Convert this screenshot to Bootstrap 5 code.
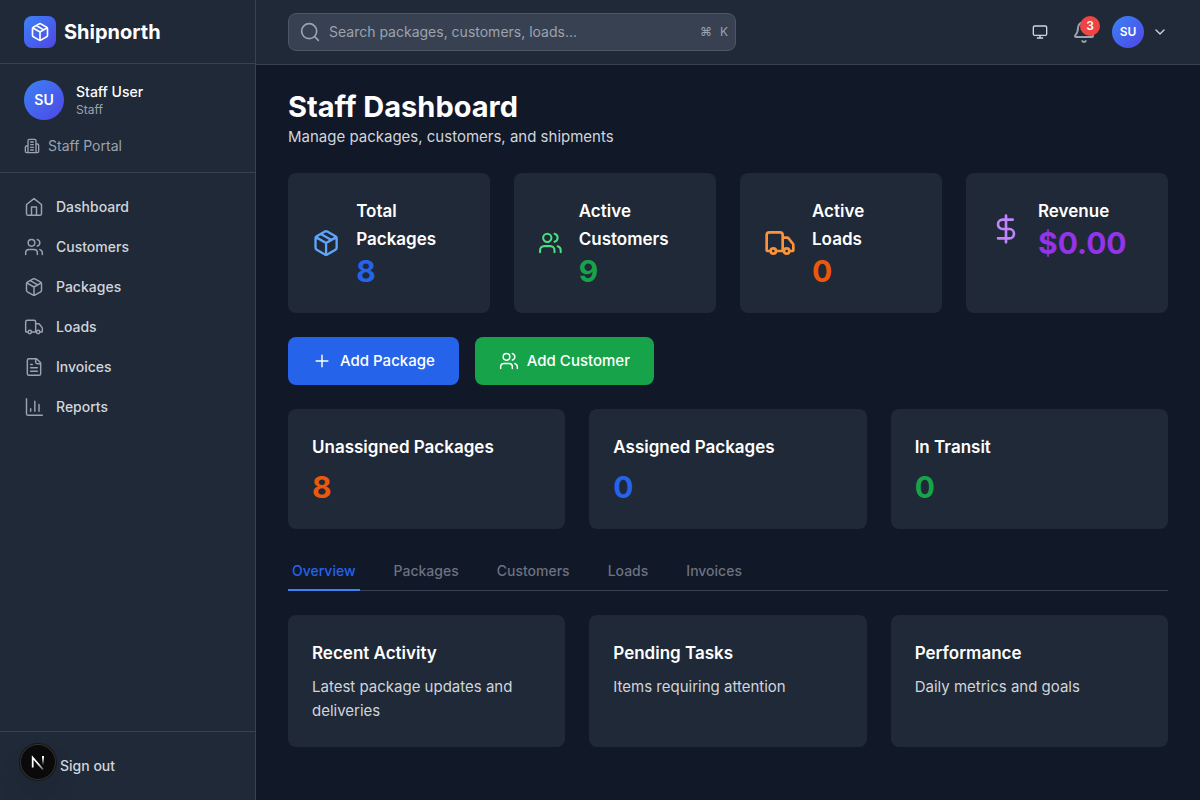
<!DOCTYPE html>
<html lang="en" data-bs-theme="dark">
<head>
<meta charset="utf-8">
<meta name="viewport" content="width=device-width, initial-scale=1">
<title>Shipnorth – Staff Dashboard</title>
<link href="https://cdn.jsdelivr.net/npm/bootstrap@5.3.0/dist/css/bootstrap.min.css" rel="stylesheet">
<style>
  :root {
    --page: #111827; --panel: #1f2937; --line: #374151;
    --soft: #d1d5db; --muted: #9ca3af; --dim: #6b7280;
    --blue: #2563eb; --green: #16a34a; --orange: #ea580c; --purple: #9333ea;
  }
  body { background: var(--page); color: #fff; font-family: Inter, "Liberation Sans", sans-serif; font-size: 15px; line-height: 24px; }
  .icon { fill: none; stroke: currentColor; stroke-width: 2; stroke-linecap: round; stroke-linejoin: round; width: 20px; height: 20px; }
  .icon-16 { width: 16px; height: 16px; }
  .icon-24 { width: 24px; height: 24px; }
  .icon-32 { width: 32px; height: 32px; flex-shrink: 1; min-width: 0; }
  .text-sm { font-size: 14px; line-height: 20px; }
  .text-xs { font-size: 12px; line-height: 16px; }
  .soft { color: var(--soft); }
  .muted { color: var(--muted); }
  .medium { font-weight: 500; }
  .gradient-fill { background: linear-gradient(135deg, #3b82f6, #4f46e5); }

  .sidebar { width: 256px; background: var(--panel); border-right: 1px solid var(--line); position: sticky; top: 0; height: 100vh; }
  .brand-bar { height: 64px; border-bottom: 1px solid var(--line); }
  .brand-mark { width: 32px; height: 32px; border-radius: 8px; }
  .brand-name { font-size: 20px; line-height: 28px; font-weight: 700; }
  .user-box { border-bottom: 1px solid var(--line); }
  .avatar { width: 40px; height: 40px; border-radius: 50%; font-size: 14px; font-weight: 600; }
  .avatar-sm { width: 32px; height: 32px; font-size: 12px; }
  .side-link { color: var(--soft); font-size: 14px; line-height: 20px; font-weight: 500; padding: 8px; border: 0; background: none; border-radius: 8px; text-decoration: none; }
  .side-link:hover { background: var(--line); color: #fff; }
  .side-link .icon { color: var(--muted); stroke-width: 1.75; }
  .side-foot { border-top: 1px solid var(--line); }

  .top-bar { height: 65px; background: var(--panel); border-bottom: 1px solid var(--line); padding: 0 32px; }
  .search { position: relative; width: 100%; max-width: 448px; }
  .search .form-control { background: var(--line); border: 1px solid #4b5563; border-radius: 8px; color: #fff; font-size: 14px; line-height: 20px; padding: 8px 64px 8px 40px; }
  .search .form-control::placeholder { color: var(--muted); opacity: 1; }
  .search-icon { position: absolute; top: 0; bottom: 0; left: 12px; margin: auto; color: var(--muted); }
  .search-keys { position: absolute; top: 0; bottom: 0; right: 8px; color: var(--muted); pointer-events: none; }
  .bar-tools { gap: 10px; }
  .bar-btn { border: 0; background: none; padding: 8px; line-height: 0; position: relative; color: var(--soft); }
  .bell-btn { padding: 6px; }
  .count { position: absolute; top: 2px; right: 2px; width: 20px; height: 20px; border-radius: 50%; background: #ef4444; color: #fff; font-size: 12px; line-height: 20px; font-weight: 600; text-align: center; }

  .content { padding: 24px 32px; }
  .page-title { font-size: 29px; line-height: 36px; font-weight: 700; }
  .panel { background: var(--panel); border-radius: 8px; padding: 24px; height: 100%; }
  .panel-title { font-size: 17px; line-height: 28px; font-weight: 600; margin: 0; }
  .figure-num { font-size: 30px; line-height: 36px; font-weight: 700; margin: 0; }
  .c-blue { color: var(--blue); } .c-green { color: var(--green); } .c-orange { color: var(--orange); } .c-purple { color: var(--purple); }
  .l-blue { color: #60a5fa; } .l-green { color: #4ade80; } .l-orange { color: #fb923c; } .l-purple { color: #c084fc; }
  .action { border: 0; border-radius: 8px; color: #fff; padding: 12px 24px; font-size: 15px; line-height: 24px; font-weight: 500; }
  .action:hover { color: #fff; filter: brightness(.9); }
  .action-blue, .action-blue:hover { background: var(--blue); }
  .action-green, .action-green:hover { background: var(--green); }
  .action .icon { stroke-width: 1.75; }
  .tabs { border-bottom: 1px solid var(--line); gap: 30px; margin-bottom: 24px; }
  .tabs .nav-link { color: var(--dim); font-size: 14px; line-height: 20px; font-weight: 500; padding: 8px 4px; border-bottom: 2px solid transparent; margin-bottom: -1px; }
  .tabs .nav-link.active { color: var(--blue); border-color: #3b82f6; }

  .dev-badge { position: fixed; left: 20px; bottom: 20px; width: 36px; height: 36px; border-radius: 50%; border: 0; padding: 0; line-height: 0; background: #0a0a0a; box-shadow: 0 0 0 1px #171717, inset 0 0 0 1px #333, 0 16px 32px -8px rgba(0,0,0,.24); }
</style>
</head>
<body>
<svg class="d-none" aria-hidden="true">
  <symbol id="package" viewBox="0 0 24 24"><path d="M11 21.73a2 2 0 0 0 2 0l7-4A2 2 0 0 0 21 16V8a2 2 0 0 0-1-1.73l-7-4a2 2 0 0 0-2 0l-7 4A2 2 0 0 0 3 8v8a2 2 0 0 0 1 1.73zM12 22V12M3.29 7 12 12l8.71-5M7.5 4.27l9 5.15"/></symbol>
  <symbol id="users" viewBox="0 0 24 24"><path d="M16 21v-2a4 4 0 0 0-4-4H6a4 4 0 0 0-4 4v2M22 21v-2a4 4 0 0 0-3-3.87M16 3.13a4 4 0 0 1 0 7.75"/><circle cx="9" cy="7" r="4"/></symbol>
  <symbol id="truck" viewBox="0 0 24 24"><path d="M14 18V6a2 2 0 0 0-2-2H4a2 2 0 0 0-2 2v11a1 1 0 0 0 1 1h2M15 18H9M19 18h2a1 1 0 0 0 1-1v-3.65a1 1 0 0 0-.22-.62l-3.48-4.35A1 1 0 0 0 17.52 8H14"/><circle cx="17" cy="18" r="2"/><circle cx="7" cy="18" r="2"/></symbol>
  <symbol id="dollar" viewBox="0 0 24 24"><path d="M12 2v20M17 5H9.5a3.5 3.5 0 0 0 0 7h5a3.5 3.5 0 0 1 0 7H6"/></symbol>
  <symbol id="home" viewBox="0 0 24 24"><path d="m3 9 9-7 9 7v11a2 2 0 0 1-2 2H5a2 2 0 0 1-2-2zM9 22V12h6v10"/></symbol>
  <symbol id="file" viewBox="0 0 24 24"><path d="M15 2H6a2 2 0 0 0-2 2v16a2 2 0 0 0 2 2h12a2 2 0 0 0 2-2V7zM14 2v4a2 2 0 0 0 2 2h4M10 9H8M16 13H8M16 17H8"/></symbol>
  <symbol id="chart" viewBox="0 0 24 24"><path d="M3 2v18a2 2 0 0 0 2 2h17M18 17V9M13 17V5M8 17v-3"/></symbol>
  <symbol id="building" viewBox="0 0 24 24"><path d="M6 22V4a2 2 0 0 1 2-2h8a2 2 0 0 1 2 2v18ZM6 12H4a2 2 0 0 0-2 2v6a2 2 0 0 0 2 2h2M18 9h2a2 2 0 0 1 2 2v9a2 2 0 0 1-2 2h-2M10 6h4M10 10h4M10 14h4M10 18h4"/></symbol>
  <symbol id="search" viewBox="0 0 24 24"><circle cx="11" cy="11" r="9"/><path d="m22 22-4.4-4.4"/></symbol>
  <symbol id="monitor" viewBox="0 0 24 24"><rect x="2" y="3" width="20" height="14" rx="2"/><path d="M8 21h8M12 17v4"/></symbol>
  <symbol id="bell" viewBox="0 0 24 24"><path d="M3.26 15.33A1 1 0 0 0 4 17h16a1 1 0 0 0 .74-1.67C19.41 13.96 18 12.5 18 8A6 6 0 0 0 6 8c0 4.5-1.41 5.96-2.74 7.33M10.27 21a2 2 0 0 0 3.46 0"/></symbol>
  <symbol id="chevron" viewBox="0 0 24 24"><path d="m6 9 6 6 6-6"/></symbol>
  <symbol id="plus" viewBox="0 0 24 24"><path d="M5 12h14M12 5v14"/></symbol>
  <symbol id="logout" viewBox="0 0 24 24"><path d="M9 21H5a2 2 0 0 1-2-2V5a2 2 0 0 1 2-2h4M16 17l5-5-5-5M21 12H9"/></symbol>
</svg>

<div class="d-flex min-vh-100">
  <aside class="sidebar d-none d-md-flex flex-column flex-shrink-0">
    <div class="brand-bar d-flex align-items-center gap-2 px-4">
      <span class="brand-mark gradient-fill d-flex align-items-center justify-content-center"><svg class="icon"><use href="#package"/></svg></span>
      <span class="brand-name">Shipnorth</span>
    </div>
    <div class="user-box px-4 py-3">
      <div class="d-flex align-items-center mb-3">
        <span class="avatar gradient-fill d-flex align-items-center justify-content-center me-2">SU</span>
        <div class="ms-1">
          <div class="text-sm medium">Staff User</div>
          <div class="text-xs muted">Staff</div>
        </div>
      </div>
      <div class="d-flex align-items-center gap-2 text-sm muted"><svg class="icon icon-16"><use href="#building"/></svg>Staff Portal</div>
    </div>
    <nav class="d-flex flex-column gap-1 p-3 flex-grow-1" aria-label="Main">
      <a class="side-link d-flex align-items-center" href="#"><svg class="icon me-2"><use href="#home"/></svg><span class="ms-1">Dashboard</span></a>
      <a class="side-link d-flex align-items-center" href="#"><svg class="icon me-2"><use href="#users"/></svg><span class="ms-1">Customers</span></a>
      <a class="side-link d-flex align-items-center" href="#"><svg class="icon me-2"><use href="#package"/></svg><span class="ms-1">Packages</span></a>
      <a class="side-link d-flex align-items-center" href="#"><svg class="icon me-2"><use href="#truck"/></svg><span class="ms-1">Loads</span></a>
      <a class="side-link d-flex align-items-center" href="#"><svg class="icon me-2"><use href="#file"/></svg><span class="ms-1">Invoices</span></a>
      <a class="side-link d-flex align-items-center" href="#"><svg class="icon me-2"><use href="#chart"/></svg><span class="ms-1">Reports</span></a>
    </nav>
    <div class="side-foot p-3">
      <button type="button" class="side-link d-flex align-items-center gap-3 w-100"><svg class="icon"><use href="#logout"/></svg>Sign out</button>
    </div>
  </aside>

  <div class="flex-grow-1">
    <header class="top-bar d-flex align-items-center justify-content-between gap-3">
      <div class="search">
        <svg class="icon search-icon"><use href="#search"/></svg>
        <input class="form-control" type="search" aria-label="Search" placeholder="Search packages, customers, loads...">
        <span class="search-keys text-xs d-flex align-items-center gap-2"><span>⌘</span><span>K</span></span>
      </div>
      <div class="bar-tools d-flex align-items-center">
        <button type="button" class="bar-btn" aria-label="Theme"><svg class="icon icon-16"><use href="#monitor"/></svg></button>
        <button type="button" class="bar-btn bell-btn" aria-label="Notifications"><svg class="icon icon-24 muted"><use href="#bell"/></svg><span class="count">3</span></button>
        <button type="button" class="bar-btn d-flex align-items-center gap-2 p-0" aria-label="Account">
          <span class="avatar avatar-sm gradient-fill text-white d-flex align-items-center justify-content-center">SU</span>
          <svg class="icon icon-16"><use href="#chevron"/></svg>
        </button>
      </div>
    </header>

    <main class="content">
      <h1 class="page-title mb-0">Staff Dashboard</h1>
      <p class="soft mb-4">Manage packages, customers, and shipments</p>

      <div class="row g-4 mb-4">
        <div class="col-6 col-lg-3"><div class="panel"><div class="d-flex align-items-center">
          <svg class="icon icon-32 l-blue"><use href="#package"/></svg>
          <div class="ms-3"><h2 class="panel-title">Total Packages</h2><p class="figure-num c-blue">8</p></div>
        </div></div></div>
        <div class="col-6 col-lg-3"><div class="panel"><div class="d-flex align-items-center">
          <svg class="icon icon-32 l-green"><use href="#users"/></svg>
          <div class="ms-3"><h2 class="panel-title">Active Customers</h2><p class="figure-num c-green">9</p></div>
        </div></div></div>
        <div class="col-6 col-lg-3"><div class="panel"><div class="d-flex align-items-center">
          <svg class="icon icon-32 l-orange"><use href="#truck"/></svg>
          <div class="ms-3"><h2 class="panel-title">Active<br>Loads</h2><p class="figure-num c-orange">0</p></div>
        </div></div></div>
        <div class="col-6 col-lg-3"><div class="panel"><div class="d-flex align-items-center">
          <svg class="icon icon-32 l-purple"><use href="#dollar"/></svg>
          <div class="ms-3"><h2 class="panel-title">Revenue</h2><p class="figure-num c-purple">$0.00</p></div>
        </div></div></div>
      </div>

      <div class="d-flex flex-wrap gap-3 mb-4">
        <button type="button" class="btn action action-blue d-flex align-items-center gap-2"><svg class="icon"><use href="#plus"/></svg>Add Package</button>
        <button type="button" class="btn action action-green d-flex align-items-center gap-2"><svg class="icon"><use href="#users"/></svg>Add Customer</button>
      </div>

      <div class="row g-4 mb-4">
        <div class="col-12 col-md-4"><div class="panel"><h2 class="panel-title mb-2">Unassigned Packages</h2><p class="figure-num c-orange">8</p></div></div>
        <div class="col-12 col-md-4"><div class="panel"><h2 class="panel-title mb-2">Assigned Packages</h2><p class="figure-num c-blue">0</p></div></div>
        <div class="col-12 col-md-4"><div class="panel"><h2 class="panel-title mb-2">In Transit</h2><p class="figure-num c-green">0</p></div></div>
      </div>

      <nav class="nav tabs" aria-label="Sections">
        <a class="nav-link active" href="#">Overview</a>
        <a class="nav-link" href="#">Packages</a>
        <a class="nav-link" href="#">Customers</a>
        <a class="nav-link" href="#">Loads</a>
        <a class="nav-link" href="#">Invoices</a>
      </nav>

      <div class="row g-4">
        <div class="col-12 col-md-4"><div class="panel"><h2 class="panel-title mb-2">Recent Activity</h2><p class="soft mb-0">Latest package updates and deliveries</p></div></div>
        <div class="col-12 col-md-4"><div class="panel"><h2 class="panel-title mb-2">Pending Tasks</h2><p class="soft mb-0">Items requiring attention</p></div></div>
        <div class="col-12 col-md-4"><div class="panel"><h2 class="panel-title mb-2">Performance</h2><p class="soft mb-0">Daily metrics and goals</p></div></div>
      </div>
    </main>
  </div>
</div>

<button type="button" class="dev-badge" aria-label="Developer tools">
  <svg width="36" height="36" viewBox="0 0 36 36" fill="none">
    <defs>
      <linearGradient id="diag" x1="20" y1="19" x2="24" y2="25" gradientUnits="userSpaceOnUse"><stop stop-color="#fff"/><stop offset="1" stop-color="#fff" stop-opacity="0.3"/></linearGradient>
      <linearGradient id="stem" x1="0" y1="13" x2="0" y2="21" gradientUnits="userSpaceOnUse"><stop stop-color="#fff"/><stop offset="1" stop-color="#fff" stop-opacity="0"/></linearGradient>
    </defs>
    <path d="M12.7 23.5V13.5L23 25.5" stroke="url(#diag)" stroke-width="1.75"/>
    <rect x="22" y="12" width="2" height="9" fill="url(#stem)"/>
  </svg>
</button>
<script src="https://cdn.jsdelivr.net/npm/bootstrap@5.3.0/dist/js/bootstrap.bundle.min.js"></script>
</body>
</html>
